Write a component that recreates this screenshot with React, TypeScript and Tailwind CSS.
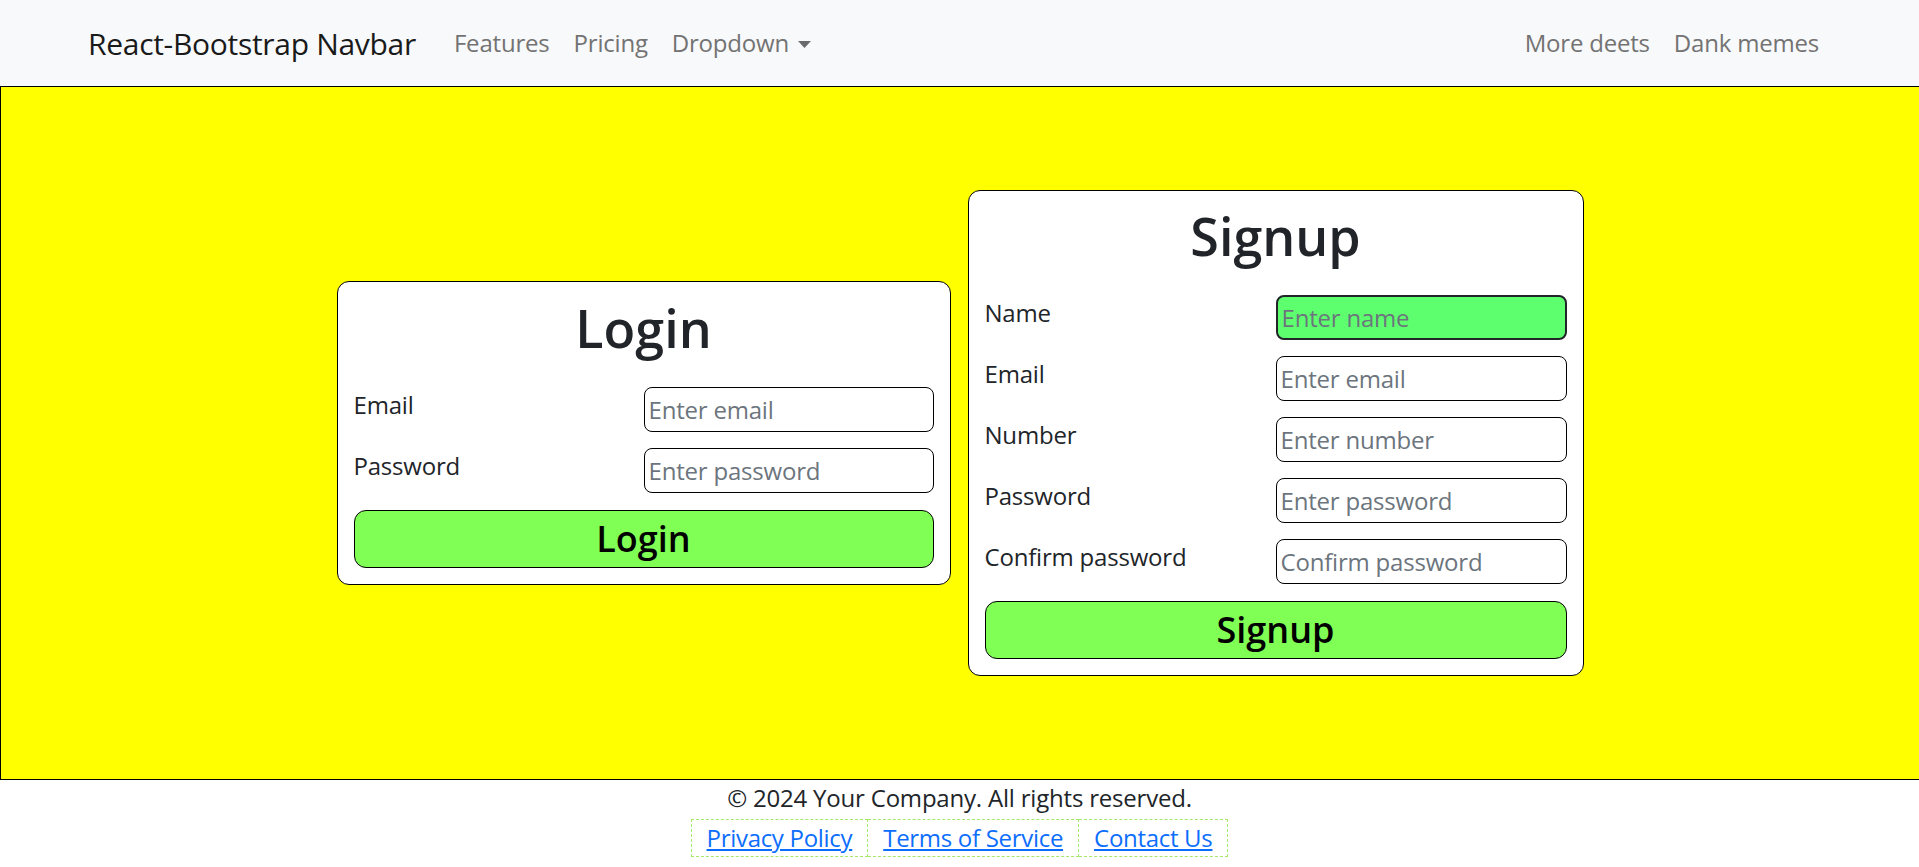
import React from "react";

// 폼 한 줄: 왼쪽 라벨, 오른쪽 입력칸
type FieldProps = {
  label: string;
  placeholder: string;
  type?: string;
  active?: boolean;
};

const Field = ({ label, placeholder, type = "text", active }: FieldProps) => {
  return (
    <div className="grid grid-cols-2 items-start">
      <label className="text-[24px] leading-[36px] tracking-[-0.2px] text-[#212529]">{label}</label>
      <input
        type={type}
        placeholder={placeholder}
        className={`h-[45px] w-full rounded-[8px] px-[4px] text-[24px] tracking-[-0.2px] text-[#212529] outline-none placeholder:text-[#6c757d] ${
          active
            ? "border-2 border-[#212529] bg-[#5eff6e] px-[3px]"
            : "border border-black bg-white"
        }`}
      />
    </div>
  );
};

const NavLink = ({ children }: { children: React.ReactNode }) => (
  <a href="#" className="px-[12px] text-[24px] leading-[36px] tracking-[-0.2px] text-[#737373]">
    {children}
  </a>
);

export default function App() {
  return (
    <div className="bg-white font-['Open_Sans',sans-serif]">
      {/* 네비게이션 바 */}
      <nav className="flex h-[86px] items-center bg-[#f8f9fa] px-[88px]">
        <a href="#" className="mr-[26px] text-[30px] leading-[45px] tracking-[-0.3px] text-[#1a1a1a]">
          React-Bootstrap Navbar
        </a>
        <NavLink>Features</NavLink>
        <NavLink>Pricing</NavLink>
        <a href="#" className="flex items-center px-[12px] text-[24px] leading-[36px] tracking-[-0.2px] text-[#737373]">
          Dropdown
          <svg width="13" height="7" viewBox="0 0 13 7" className="ml-[9px] mt-[2px]">
            <path d="M0 0 L13 0 L6.5 7 Z" fill="#6b6b6b" />
          </svg>
        </a>
        <div className="ml-auto flex">
          <NavLink>More deets</NavLink>
          <NavLink>Dank memes</NavLink>
        </div>
      </nav>

      {/* 노란 영역 + 카드 두 개 */}
      <main className="flex h-[694px] items-center justify-center gap-[17px] border-y border-l border-black bg-[#ffff00]">
        <div className="w-[614px] rounded-[12px] border border-black bg-white px-[16px] pt-[15px] pb-[16px]">
          <h1 className="mb-[27px] text-center text-[52px] font-semibold leading-[1.2] text-[#212529]">
            Login
          </h1>
          <div className="flex flex-col gap-[16px]">
            <Field label="Email" placeholder="Enter email" type="email" />
            <Field label="Password" placeholder="Enter password" type="password" />
            <button className="mt-[1px] h-[58px] w-full rounded-[12px] border border-black bg-[#80ff55] text-[36px] font-semibold text-black">
              Login
            </button>
          </div>
        </div>

        <div className="w-[616px] rounded-[12px] border border-black bg-white px-[16px] pt-[14px] pb-[16px]">
          <h1 className="mb-[27px] text-center text-[52px] font-semibold leading-[1.2] text-[#212529]">
            Signup
          </h1>
          <div className="flex flex-col gap-[16px]">
            <Field label="Name" placeholder="Enter name" active />
            <Field label="Email" placeholder="Enter email" type="email" />
            <Field label="Number" placeholder="Enter number" />
            <Field label="Password" placeholder="Enter password" type="password" />
            <Field label="Confirm password" placeholder="Confirm password" type="password" />
            <button className="mt-[1px] h-[58px] w-full rounded-[12px] border border-black bg-[#80ff55] text-[36px] font-semibold text-black">
              Signup
            </button>
          </div>
        </div>
      </main>

      {/* 푸터 */}
      <footer className="pb-[10px] text-center">
        <p className="text-[24px] leading-[36px] tracking-[-0.2px] text-[#212529]">
          © 2024 Your Company. All rights reserved.
        </p>
        <ul className="mt-[3px] flex justify-center text-[24px] leading-[36px] tracking-[-0.3px]">
          <li className="border border-dashed border-[#a6e86a] px-[15px]">
            <a href="#" className="text-[#0d6efd] underline">Privacy Policy</a>
          </li>
          <li className="border border-l-0 border-dashed border-[#a6e86a] px-[15px]">
            <a href="#" className="text-[#0d6efd] underline">Terms of Service</a>
          </li>
          <li className="border border-l-0 border-dashed border-[#a6e86a] px-[15px]">
            <a href="#" className="text-[#0d6efd] underline">Contact Us</a>
          </li>
        </ul>
      </footer>
    </div>
  );
}
